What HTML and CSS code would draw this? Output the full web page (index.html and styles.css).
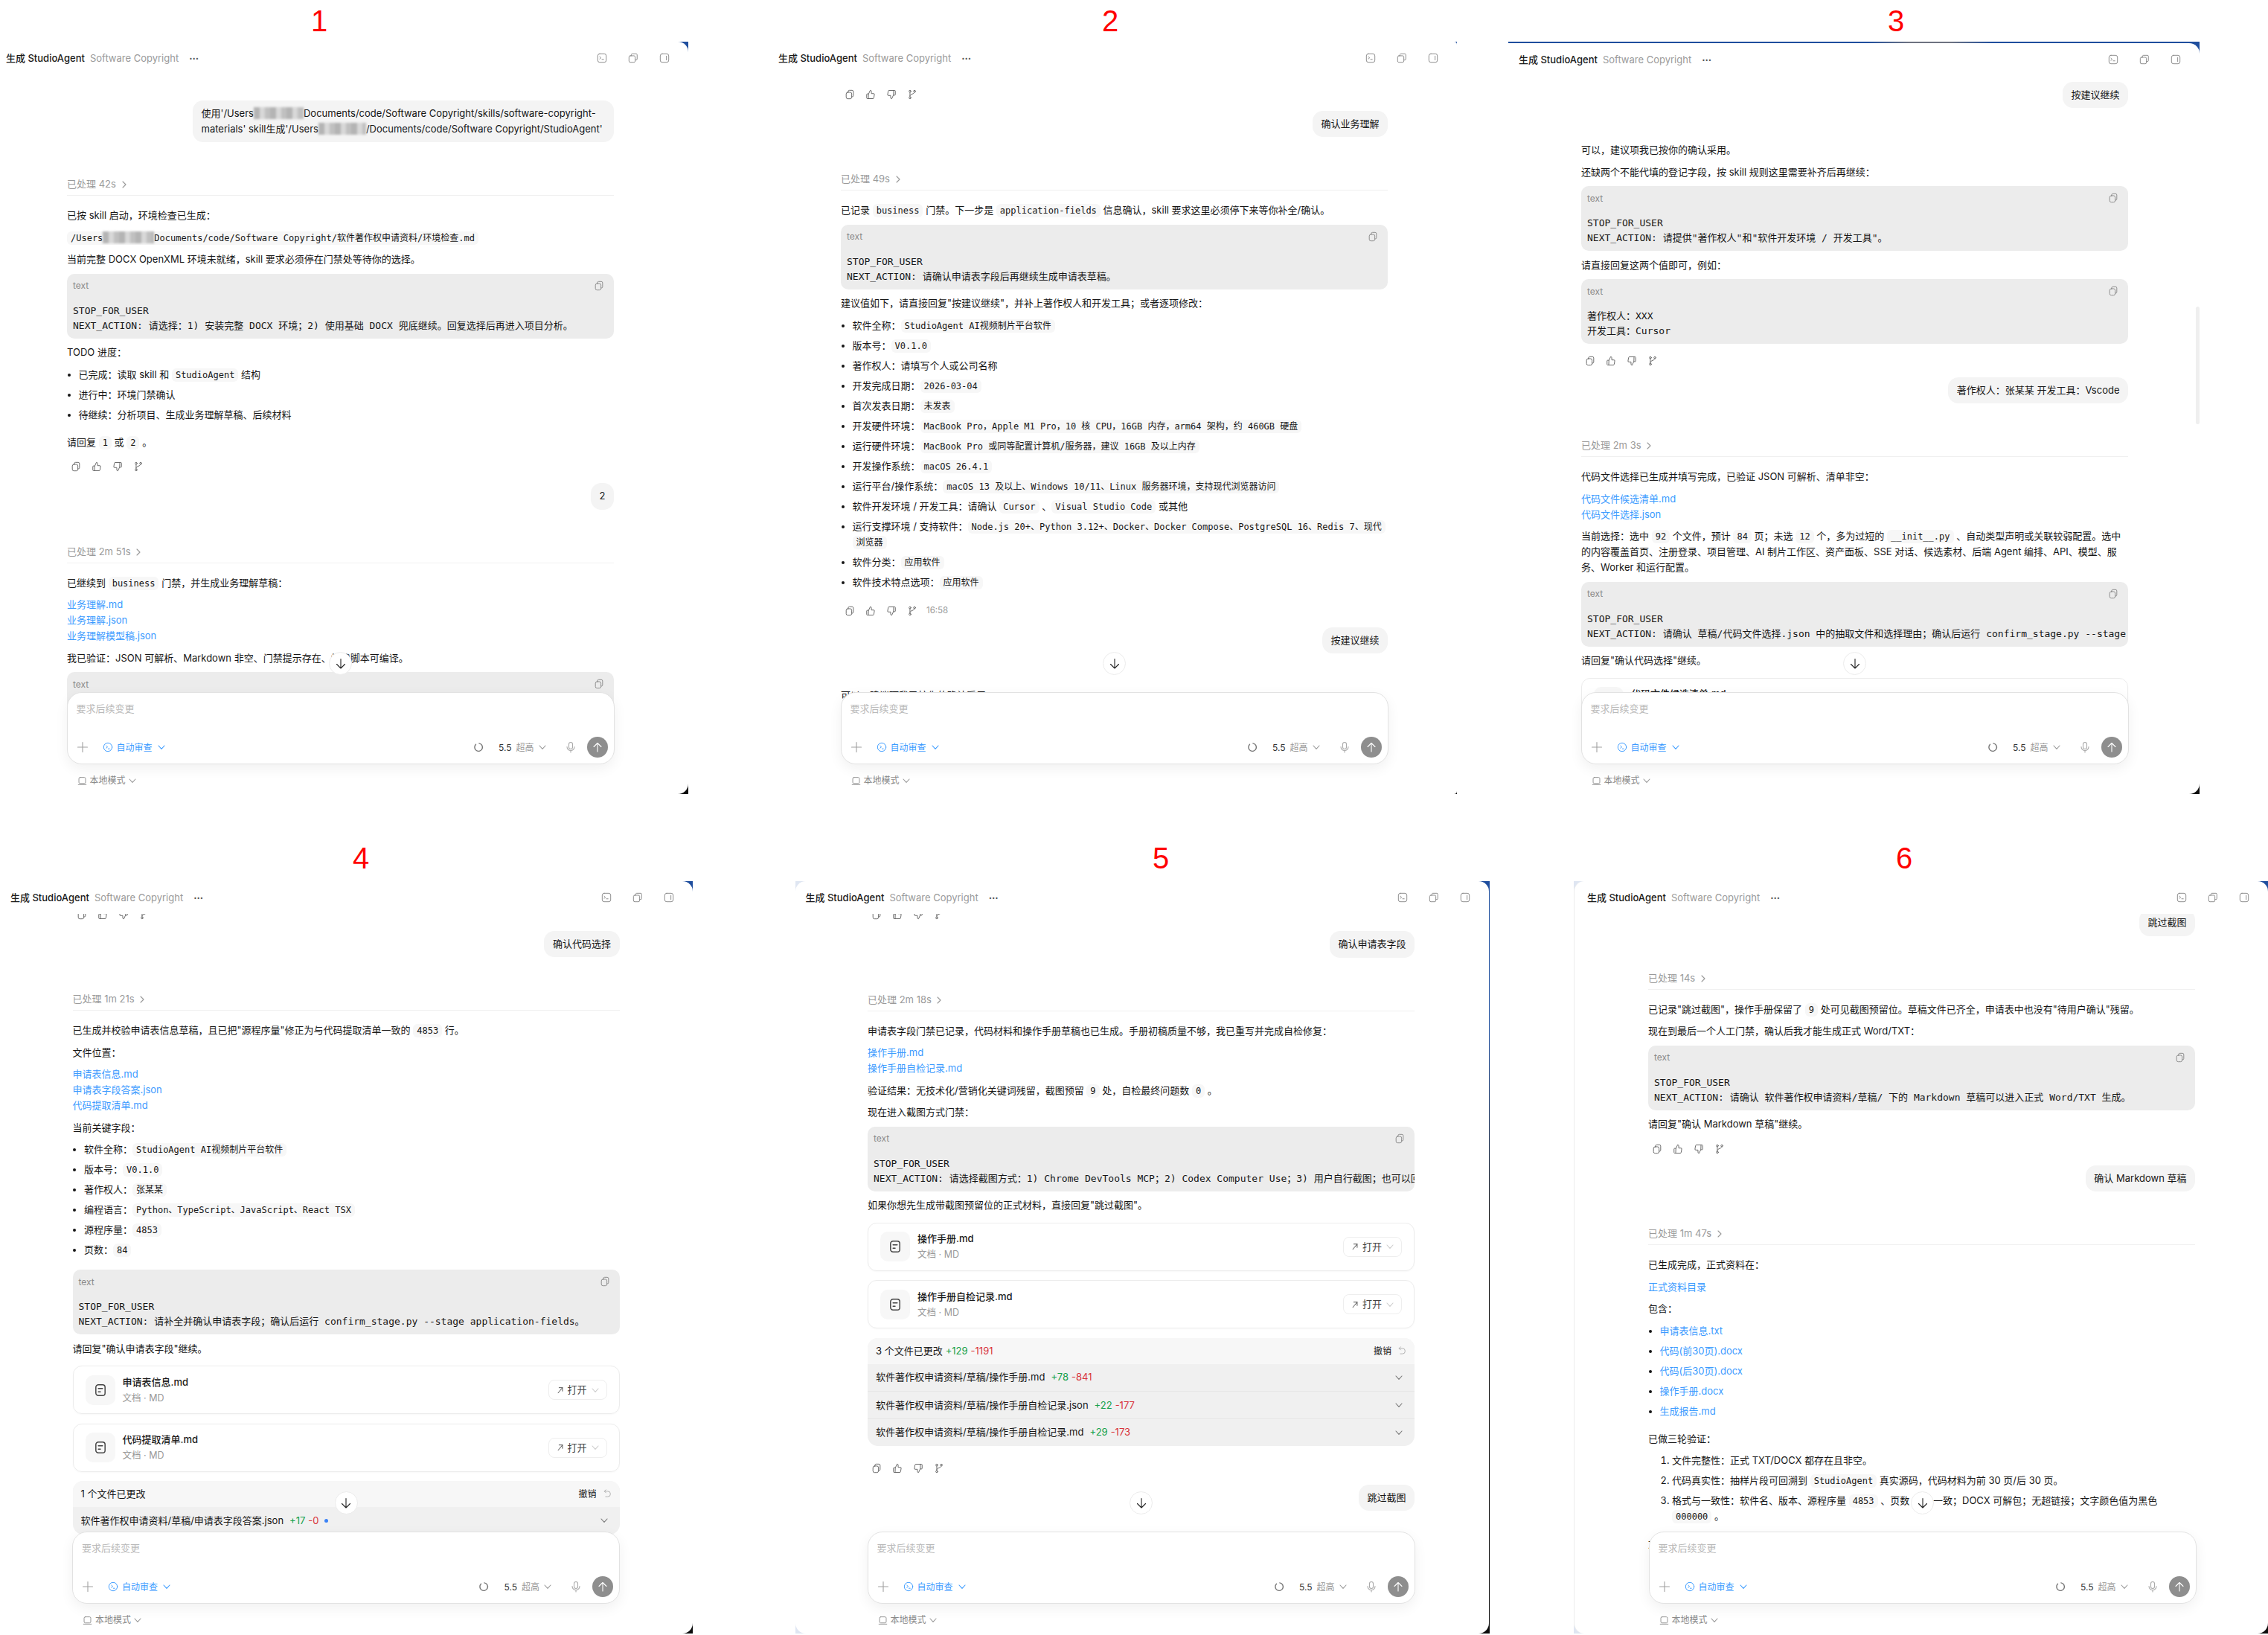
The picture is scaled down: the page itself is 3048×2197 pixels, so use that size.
FILE: index.html
```html
<!DOCTYPE html>
<html lang="zh-CN">
<head>
<meta charset="utf-8">
<title>生成 StudioAgent</title>
<link rel="stylesheet" href="styles.css">
</head>
<body>
<svg class="defs" xmlns="http://www.w3.org/2000/svg">
  <symbol id="term" viewBox="0 0 16 16"><rect x="1.5" y="1.5" width="13" height="13" rx="3"/><path d="M4.5 6l2 1.7-2 1.7M8 10h2.5"/></symbol>
  <symbol id="copy2" viewBox="0 0 16 16"><rect x="1.5" y="4.5" width="9.5" height="10" rx="2"/><path d="M5 4.5V3a1.5 1.5 0 0 1 1.5-1.5h6A1.5 1.5 0 0 1 14 3v6.500a1.500 1.500 0 0 1-1.500 1.500H11"/></symbol>
  <symbol id="side" viewBox="0 0 16 16"><rect x="1.500" y="1.500" width="13" height="13" rx="3"/><path d="M11 5v6"/></symbol>
  <symbol id="copy" viewBox="0 0 16 16"><rect x="2.500" y="4.500" width="8.500" height="10" rx="2.500"/><path d="M5.500 4.500V3.500a2 2 0 0 1 2-2h4a2 2 0 0 1 2 2v6a2 2 0 0 1-2 2H11"/></symbol>
  <symbol id="up" viewBox="0 0 16 16"><path d="M5 7l2.500-5.500a1.700 1.700 0 0 1 1.700 1.700V6.500h3.300a1.300 1.300 0 0 1 1.300 1.500l-.8 5a1.500 1.500 0 0 1-1.500 1.300H5zM5 7H3a1 1 0 0 0-1 1v5.300a1 1 0 0 0 1 1h2"/></symbol>
  <symbol id="down" viewBox="0 0 16 16"><path d="M11 9l-2.500 5.500a1.700 1.700 0 0 1-1.700-1.700V9.500H3.500a1.300 1.300 0 0 1-1.300-1.500l.8-5a1.500 1.500 0 0 1 1.500-1.300H11zM11 9h2a1 1 0 0 0 1-1V2.700a1 1 0 0 0-1-1h-2"/></symbol>
  <symbol id="branch" viewBox="0 0 16 16"><circle cx="4.500" cy="3" r="1.500"/><circle cx="4.500" cy="13" r="1.500"/><circle cx="11.500" cy="3" r="1.500"/><path d="M4.500 4.500v7M11.500 4.500c0 3-7 2.500-7 5.500"/></symbol>
  <symbol id="plus" viewBox="0 0 16 16"><path d="M8 1.500v13M1.500 8h13"/></symbol>
  <symbol id="auto" viewBox="0 0 16 16"><circle cx="8" cy="8" r="6.500"/><path d="M5.500 6l2 1.700-2 1.700M8.500 10.500h2"/></symbol>
  <symbol id="chev" viewBox="0 0 10 10"><path d="M1 3l4 4.300L9 3"/></symbol>
  <symbol id="chevr" viewBox="0 0 10 10"><path d="M3 1l4 4-4 4"/></symbol>
  <symbol id="spin" viewBox="0 0 16 16"><path d="M9 2.200A6 6 0 1 1 4 3.800" stroke-width="1.600"/></symbol>
  <symbol id="mic" viewBox="0 0 16 16"><rect x="5.500" y="1.500" width="5" height="9" rx="2.500"/><path d="M3 7.500a5 5 0 0 0 10 0M8 12.500v2.500"/></symbol>
  <symbol id="aup" viewBox="0 0 16 16"><path d="M8 14V2.500M3 7.500l5-5 5 5"/></symbol>
  <symbol id="adown" viewBox="0 0 16 16"><path d="M8 1.500V14M2.500 8.500L8 14l5.500-5.500"/></symbol>
  <symbol id="doc" viewBox="0 0 16 16"><rect x="2.500" y="1.500" width="11" height="13" rx="3"/><path d="M5.500 6h5M5.500 10h2.500"/></symbol>
  <symbol id="ext" viewBox="0 0 12 12"><path d="M2.500 10.500l7-8.500M4 2h5.500v5.500"/></symbol>
  <symbol id="undo" viewBox="0 0 16 16"><path d="M4 3.500h5.500a4.500 4.500 0 0 1 0 9H6M6.500 1L4 3.500 6.500 6"/></symbol>
  <symbol id="laptop" viewBox="0 0 16 16"><rect x="2.500" y="2" width="11" height="10" rx="2"/><path d="M1.500 14h13"/></symbol>
</svg>

<main class="sheet">
  <section class="row row-top">

    <article class="cell c1">
      <div class="label">1</div>
      <div class="win w1">
        <div class="pane">
          <header class="head"><b class="t">生成 StudioAgent</b><span class="sub">Software Copyright</span><span class="more">···</span><span class="tools"><svg class="i"><use href="#term"/></svg><svg class="i"><use href="#copy2"/></svg><svg class="i"><use href="#side"/></svg></span></header>
          <div class="scroll"><div class="col">
            <div class="user wide">使用'/Users<span class="mosaic m67"></span>Documents/code/Software Copyright/skills/software-copyright-materials' skill生成'/Users<span class="mosaic m64"></span>/Documents/code/Software Copyright/StudioAgent'</div>
            <div class="sec">已处理 42s <svg class="ch"><use href="#chevr"/></svg></div>
            <p>已按 skill 启动，环境检查已生成：</p>
            <p><code class="c">/Users<span class="mosaic m69"></span>Documents/code/Software Copyright/软件著作权申请资料/环境检查.md</code></p>
            <p>当前完整 DOCX OpenXML 环境未就绪，skill 要求必须停在门禁处等待你的选择。</p>
            <div class="block"><div class="bh"><span>text</span><svg class="i"><use href="#copy"/></svg></div><pre>STOP_FOR_USER
NEXT_ACTION: 请选择：1) 安装完整 DOCX 环境；2) 使用基础 DOCX 兜底继续。回复选择后再进入项目分析。</pre></div>
            <p>TODO 进度：</p>
            <ul>
              <li>已完成：读取 skill 和 <code class="c">StudioAgent</code> 结构</li>
              <li>进行中：环境门禁确认</li>
              <li>待继续：分析项目、生成业务理解草稿、后续材料</li>
            </ul>
            <p>请回复 <code class="c">1</code> 或 <code class="c">2</code> 。</p>
            <div class="acts"><svg class="i"><use href="#copy"/></svg><svg class="i"><use href="#up"/></svg><svg class="i"><use href="#down"/></svg><svg class="i"><use href="#branch"/></svg></div>
            <div class="user">2</div>
            <div class="sec">已处理 2m 51s <svg class="ch"><use href="#chevr"/></svg></div>
            <p>已继续到 <code class="c">business</code> 门禁，并生成业务理解草稿：</p>
            <p><a href="#">业务理解.md</a><br><a href="#">业务理解.json</a><br><a href="#">业务理解模型稿.json</a></p>
            <p>我已验证：JSON 可解析、Markdown 非空、门禁提示存在、构建脚本可编译。</p>
            <div class="block"><div class="bh"><span>text</span><svg class="i"><use href="#copy"/></svg></div><pre>STOP_FOR_USER</pre></div>
          </div></div>
          <button class="godown"><svg class="i16"><use href="#adown"/></svg></button>
          <div class="dock">
            <div class="composer">
              <div class="ph">要求后续变更</div>
              <div class="bar"><svg class="i16 plus"><use href="#plus"/></svg><span class="auto"><svg class="i"><use href="#auto"/></svg>自动审查<svg class="ch"><use href="#chev"/></svg></span><span class="right"><svg class="i spin"><use href="#spin"/></svg><span class="ver">5.5</span><span class="lv">超高</span><svg class="ch"><use href="#chev"/></svg><svg class="i16 mic"><use href="#mic"/></svg><span class="send"><svg class="i16"><use href="#aup"/></svg></span></span></div>
            </div>
            <div class="local"><svg class="i"><use href="#laptop"/></svg>本地模式<svg class="ch"><use href="#chev"/></svg></div>
          </div>
        </div>
      </div>
    </article>

    <article class="cell c2">
      <div class="label">2</div>
      <div class="win w2">
        <div class="pane">
          <header class="head"><b class="t">生成 StudioAgent</b><span class="sub">Software Copyright</span><span class="more">···</span><span class="tools"><svg class="i"><use href="#term"/></svg><svg class="i"><use href="#copy2"/></svg><svg class="i"><use href="#side"/></svg></span></header>
          <div class="scroll"><div class="col">
            <div class="acts first"><svg class="i"><use href="#copy"/></svg><svg class="i"><use href="#up"/></svg><svg class="i"><use href="#down"/></svg><svg class="i"><use href="#branch"/></svg></div>
            <div class="user">确认业务理解</div>
            <div class="sec">已处理 49s <svg class="ch"><use href="#chevr"/></svg></div>
            <p>已记录 <code class="c">business</code> 门禁。下一步是 <code class="c">application-fields</code> 信息确认，skill 要求这里必须停下来等你补全/确认。</p>
            <div class="block"><div class="bh"><span>text</span><svg class="i"><use href="#copy"/></svg></div><pre>STOP_FOR_USER
NEXT_ACTION: 请确认申请表字段后再继续生成申请表草稿。</pre></div>
            <p>建议值如下，请直接回复"按建议继续"，并补上著作权人和开发工具；或者逐项修改：</p>
            <ul>
              <li>软件全称：<code class="c">StudioAgent AI视频制片平台软件</code></li>
              <li>版本号：<code class="c">V0.1.0</code></li>
              <li>著作权人：请填写个人或公司名称</li>
              <li>开发完成日期：<code class="c">2026-03-04</code></li>
              <li>首次发表日期：<code class="c">未发表</code></li>
              <li>开发硬件环境：<code class="c">MacBook Pro，Apple M1 Pro，10 核 CPU，16GB 内存，arm64 架构，约 460GB 硬盘</code></li>
              <li>运行硬件环境：<code class="c">MacBook Pro 或同等配置计算机/服务器，建议 16GB 及以上内存</code></li>
              <li>开发操作系统：<code class="c">macOS 26.4.1</code></li>
              <li>运行平台/操作系统：<code class="c">macOS 13 及以上、Windows 10/11、Linux 服务器环境，支持现代浏览器访问</code></li>
              <li>软件开发环境 / 开发工具：请确认 <code class="c">Cursor</code> 、<code class="c">Visual Studio Code</code> 或其他</li>
              <li>运行支撑环境 / 支持软件：<code class="c">Node.js 20+、Python 3.12+、Docker、Docker Compose、PostgreSQL 16、Redis 7、现代浏览器</code></li>
              <li>软件分类：<code class="c">应用软件</code></li>
              <li>软件技术特点选项：<code class="c">应用软件</code></li>
            </ul>
            <div class="acts"><svg class="i"><use href="#copy"/></svg><svg class="i"><use href="#up"/></svg><svg class="i"><use href="#down"/></svg><svg class="i"><use href="#branch"/></svg><span class="time">16:58</span></div>
            <div class="user">按建议继续</div>
            <p>可以，建议项我已按你的确认采用。</p>
          </div></div>
          <button class="godown"><svg class="i16"><use href="#adown"/></svg></button>
          <div class="dock">
            <div class="composer">
              <div class="ph">要求后续变更</div>
              <div class="bar"><svg class="i16 plus"><use href="#plus"/></svg><span class="auto"><svg class="i"><use href="#auto"/></svg>自动审查<svg class="ch"><use href="#chev"/></svg></span><span class="right"><svg class="i spin"><use href="#spin"/></svg><span class="ver">5.5</span><span class="lv">超高</span><svg class="ch"><use href="#chev"/></svg><svg class="i16 mic"><use href="#mic"/></svg><span class="send"><svg class="i16"><use href="#aup"/></svg></span></span></div>
            </div>
            <div class="local"><svg class="i"><use href="#laptop"/></svg>本地模式<svg class="ch"><use href="#chev"/></svg></div>
          </div>
        </div>
      </div>
    </article>

    <article class="cell c3">
      <div class="label">3</div>
      <div class="win w3">
        <div class="pane">
          <header class="head"><b class="t">生成 StudioAgent</b><span class="sub">Software Copyright</span><span class="more">···</span><span class="tools"><svg class="i"><use href="#term"/></svg><svg class="i"><use href="#copy2"/></svg><svg class="i"><use href="#side"/></svg></span></header>
          <div class="scroll"><div class="col">
            <div class="user">按建议继续</div>
            <p>可以，建议项我已按你的确认采用。</p>
            <p>还缺两个不能代填的登记字段，按 skill 规则这里需要补齐后再继续：</p>
            <div class="block"><div class="bh"><span>text</span><svg class="i"><use href="#copy"/></svg></div><pre>STOP_FOR_USER
NEXT_ACTION: 请提供"著作权人"和"软件开发环境 / 开发工具"。</pre></div>
            <p>请直接回复这两个值即可，例如：</p>
            <div class="block"><div class="bh"><span>text</span><svg class="i"><use href="#copy"/></svg></div><pre>著作权人：XXX
开发工具：Cursor</pre></div>
            <div class="acts"><svg class="i"><use href="#copy"/></svg><svg class="i"><use href="#up"/></svg><svg class="i"><use href="#down"/></svg><svg class="i"><use href="#branch"/></svg></div>
            <div class="user">著作权人：张某某 开发工具：Vscode</div>
            <div class="sec">已处理 2m 3s <svg class="ch"><use href="#chevr"/></svg></div>
            <p>代码文件选择已生成并填写完成，已验证 JSON 可解析、清单非空：</p>
            <p><a href="#">代码文件候选清单.md</a><br><a href="#">代码文件选择.json</a></p>
            <p>当前选择：选中 <code class="c">92</code> 个文件，预计 <code class="c">84</code> 页；未选 <code class="c">12</code> 个，多为过短的 <code class="c">__init__.py</code> 、自动类型声明或关联较弱配置。选中的内容覆盖首页、注册登录、项目管理、AI 制片工作区、资产面板、SSE 对话、候选素材、后端 Agent 编排、API、模型、服务、Worker 和运行配置。</p>
            <div class="block"><div class="bh"><span>text</span><svg class="i"><use href="#copy"/></svg></div><pre>STOP_FOR_USER
NEXT_ACTION: 请确认 草稿/代码文件选择.json 中的抽取文件和选择理由；确认后运行 confirm_stage.py --stage code-selection。</pre></div>
            <p>请回复"确认代码选择"继续。</p>
            <div class="card"><span class="dbox"><svg class="i16"><use href="#doc"/></svg></span><span class="dmeta"><b>代码文件候选清单.md</b><small>文档 · MD</small></span><span class="open"><svg class="ex"><use href="#ext"/></svg>打开<svg class="ch"><use href="#chev"/></svg></span></div>
          </div></div>
          <button class="godown"><svg class="i16"><use href="#adown"/></svg></button>
          <div class="bar-scroll"></div>
          <div class="dock">
            <div class="composer">
              <div class="ph">要求后续变更</div>
              <div class="bar"><svg class="i16 plus"><use href="#plus"/></svg><span class="auto"><svg class="i"><use href="#auto"/></svg>自动审查<svg class="ch"><use href="#chev"/></svg></span><span class="right"><svg class="i spin"><use href="#spin"/></svg><span class="ver">5.5</span><span class="lv">超高</span><svg class="ch"><use href="#chev"/></svg><svg class="i16 mic"><use href="#mic"/></svg><span class="send"><svg class="i16"><use href="#aup"/></svg></span></span></div>
            </div>
            <div class="local"><svg class="i"><use href="#laptop"/></svg>本地模式<svg class="ch"><use href="#chev"/></svg></div>
          </div>
        </div>
      </div>
    </article>
  </section>

  <section class="row row-bottom">

    <article class="cell c4">
      <div class="label">4</div>
      <div class="win w4">
        <div class="pane">
          <header class="head"><b class="t">生成 StudioAgent</b><span class="sub">Software Copyright</span><span class="more">···</span><span class="tools"><svg class="i"><use href="#term"/></svg><svg class="i"><use href="#copy2"/></svg><svg class="i"><use href="#side"/></svg></span></header>
          <div class="scroll"><div class="col">
            <div class="acts first"><svg class="i"><use href="#copy"/></svg><svg class="i"><use href="#up"/></svg><svg class="i"><use href="#down"/></svg><svg class="i"><use href="#branch"/></svg></div>
            <div class="user">确认代码选择</div>
            <div class="sec">已处理 1m 21s <svg class="ch"><use href="#chevr"/></svg></div>
            <p>已生成并校验申请表信息草稿，且已把"源程序量"修正为与代码提取清单一致的 <code class="c">4853</code> 行。</p>
            <p>文件位置：</p>
            <p><a href="#">申请表信息.md</a><br><a href="#">申请表字段答案.json</a><br><a href="#">代码提取清单.md</a></p>
            <p>当前关键字段：</p>
            <ul>
              <li>软件全称：<code class="c">StudioAgent AI视频制片平台软件</code></li>
              <li>版本号：<code class="c">V0.1.0</code></li>
              <li>著作权人：<code class="c">张某某</code></li>
              <li>编程语言：<code class="c">Python、TypeScript、JavaScript、React TSX</code></li>
              <li>源程序量：<code class="c">4853</code></li>
              <li>页数：<code class="c">84</code></li>
            </ul>
            <div class="block"><div class="bh"><span>text</span><svg class="i"><use href="#copy"/></svg></div><pre>STOP_FOR_USER
NEXT_ACTION: 请补全并确认申请表字段；确认后运行 confirm_stage.py --stage application-fields。</pre></div>
            <p>请回复"确认申请表字段"继续。</p>
            <div class="card"><span class="dbox"><svg class="i16"><use href="#doc"/></svg></span><span class="dmeta"><b>申请表信息.md</b><small>文档 · MD</small></span><span class="open"><svg class="ex"><use href="#ext"/></svg>打开<svg class="ch"><use href="#chev"/></svg></span></div>
            <div class="card"><span class="dbox"><svg class="i16"><use href="#doc"/></svg></span><span class="dmeta"><b>代码提取清单.md</b><small>文档 · MD</small></span><span class="open"><svg class="ex"><use href="#ext"/></svg>打开<svg class="ch"><use href="#chev"/></svg></span></div>
            <div class="changes">
              <div class="ch-head"><span>1 个文件已更改</span><span class="revert">撤销<svg class="i"><use href="#undo"/></svg></span></div>
              <div class="ch-row"><span>软件著作权申请资料/草稿/申请表字段答案.json</span><i class="add">+17</i><i class="del">-0</i><i class="dot"></i><svg class="ch end"><use href="#chev"/></svg></div>
            </div>
          </div></div>
          <button class="godown"><svg class="i16"><use href="#adown"/></svg></button>
          <div class="dock">
            <div class="composer">
              <div class="ph">要求后续变更</div>
              <div class="bar"><svg class="i16 plus"><use href="#plus"/></svg><span class="auto"><svg class="i"><use href="#auto"/></svg>自动审查<svg class="ch"><use href="#chev"/></svg></span><span class="right"><svg class="i spin"><use href="#spin"/></svg><span class="ver">5.5</span><span class="lv">超高</span><svg class="ch"><use href="#chev"/></svg><svg class="i16 mic"><use href="#mic"/></svg><span class="send"><svg class="i16"><use href="#aup"/></svg></span></span></div>
            </div>
            <div class="local"><svg class="i"><use href="#laptop"/></svg>本地模式<svg class="ch"><use href="#chev"/></svg></div>
          </div>
        </div>
      </div>
    </article>

    <article class="cell c5">
      <div class="label">5</div>
      <div class="win w5">
        <div class="pane">
          <header class="head"><b class="t">生成 StudioAgent</b><span class="sub">Software Copyright</span><span class="more">···</span><span class="tools"><svg class="i"><use href="#term"/></svg><svg class="i"><use href="#copy2"/></svg><svg class="i"><use href="#side"/></svg></span></header>
          <div class="scroll"><div class="col">
            <div class="acts first"><svg class="i"><use href="#copy"/></svg><svg class="i"><use href="#up"/></svg><svg class="i"><use href="#down"/></svg><svg class="i"><use href="#branch"/></svg></div>
            <div class="user">确认申请表字段</div>
            <div class="sec">已处理 2m 18s <svg class="ch"><use href="#chevr"/></svg></div>
            <p>申请表字段门禁已记录，代码材料和操作手册草稿也已生成。手册初稿质量不够，我已重写并完成自检修复：</p>
            <p><a href="#">操作手册.md</a><br><a href="#">操作手册自检记录.md</a></p>
            <p>验证结果：无技术化/营销化关键词残留，截图预留 <code class="c">9</code> 处，自检最终问题数 <code class="c">0</code> 。</p>
            <p>现在进入截图方式门禁：</p>
            <div class="block"><div class="bh"><span>text</span><svg class="i"><use href="#copy"/></svg></div><pre>STOP_FOR_USER
NEXT_ACTION: 请选择截图方式：1) Chrome DevTools MCP；2) Codex Computer Use；3) 用户自行截图；也可以回复跳过截图。</pre></div>
            <p>如果你想先生成带截图预留位的正式材料，直接回复"跳过截图"。</p>
            <div class="card"><span class="dbox"><svg class="i16"><use href="#doc"/></svg></span><span class="dmeta"><b>操作手册.md</b><small>文档 · MD</small></span><span class="open"><svg class="ex"><use href="#ext"/></svg>打开<svg class="ch"><use href="#chev"/></svg></span></div>
            <div class="card"><span class="dbox"><svg class="i16"><use href="#doc"/></svg></span><span class="dmeta"><b>操作手册自检记录.md</b><small>文档 · MD</small></span><span class="open"><svg class="ex"><use href="#ext"/></svg>打开<svg class="ch"><use href="#chev"/></svg></span></div>
            <div class="changes">
              <div class="ch-head"><span>3 个文件已更改<i class="add">+129</i><i class="del">-1191</i></span><span class="revert">撤销<svg class="i"><use href="#undo"/></svg></span></div>
              <div class="ch-row"><span>软件著作权申请资料/草稿/操作手册.md</span><i class="add">+78</i><i class="del">-841</i><svg class="ch end"><use href="#chev"/></svg></div>
              <div class="ch-row"><span>软件著作权申请资料/草稿/操作手册自检记录.json</span><i class="add">+22</i><i class="del">-177</i><svg class="ch end"><use href="#chev"/></svg></div>
              <div class="ch-row"><span>软件著作权申请资料/草稿/操作手册自检记录.md</span><i class="add">+29</i><i class="del">-173</i><svg class="ch end"><use href="#chev"/></svg></div>
            </div>
            <div class="acts"><svg class="i"><use href="#copy"/></svg><svg class="i"><use href="#up"/></svg><svg class="i"><use href="#down"/></svg><svg class="i"><use href="#branch"/></svg></div>
            <div class="user">跳过截图</div>
          </div></div>
          <button class="godown"><svg class="i16"><use href="#adown"/></svg></button>
          <div class="dock">
            <div class="composer">
              <div class="ph">要求后续变更</div>
              <div class="bar"><svg class="i16 plus"><use href="#plus"/></svg><span class="auto"><svg class="i"><use href="#auto"/></svg>自动审查<svg class="ch"><use href="#chev"/></svg></span><span class="right"><svg class="i spin"><use href="#spin"/></svg><span class="ver">5.5</span><span class="lv">超高</span><svg class="ch"><use href="#chev"/></svg><svg class="i16 mic"><use href="#mic"/></svg><span class="send"><svg class="i16"><use href="#aup"/></svg></span></span></div>
            </div>
            <div class="local"><svg class="i"><use href="#laptop"/></svg>本地模式<svg class="ch"><use href="#chev"/></svg></div>
          </div>
        </div>
      </div>
    </article>

    <article class="cell c6">
      <div class="label">6</div>
      <div class="win w6">
        <div class="pane">
          <header class="head"><b class="t">生成 StudioAgent</b><span class="sub">Software Copyright</span><span class="more">···</span><span class="tools"><svg class="i"><use href="#term"/></svg><svg class="i"><use href="#copy2"/></svg><svg class="i"><use href="#side"/></svg></span></header>
          <div class="scroll"><div class="col">
            <div class="user">跳过截图</div>
            <div class="sec">已处理 14s <svg class="ch"><use href="#chevr"/></svg></div>
            <p>已记录"跳过截图"，操作手册保留了 <code class="c">9</code> 处可见截图预留位。草稿文件已齐全，申请表中也没有"待用户确认"残留。</p>
            <p>现在到最后一个人工门禁，确认后我才能生成正式 Word/TXT：</p>
            <div class="block"><div class="bh"><span>text</span><svg class="i"><use href="#copy"/></svg></div><pre>STOP_FOR_USER
NEXT_ACTION: 请确认 软件著作权申请资料/草稿/ 下的 Markdown 草稿可以进入正式 Word/TXT 生成。</pre></div>
            <p>请回复"确认 Markdown 草稿"继续。</p>
            <div class="acts"><svg class="i"><use href="#copy"/></svg><svg class="i"><use href="#up"/></svg><svg class="i"><use href="#down"/></svg><svg class="i"><use href="#branch"/></svg></div>
            <div class="user">确认 Markdown 草稿</div>
            <div class="sec">已处理 1m 47s <svg class="ch"><use href="#chevr"/></svg></div>
            <p>已生成完成，正式资料在：</p>
            <p><a href="#">正式资料目录</a></p>
            <p>包含：</p>
            <ul>
              <li><a href="#">申请表信息.txt</a></li>
              <li><a href="#">代码(前30页).docx</a></li>
              <li><a href="#">代码(后30页).docx</a></li>
              <li><a href="#">操作手册.docx</a></li>
              <li><a href="#">生成报告.md</a></li>
            </ul>
            <p>已做三轮验证：</p>
            <ol>
              <li>文件完整性：正式 TXT/DOCX 都存在且非空。</li>
              <li>代码真实性：抽样片段可回溯到 <code class="c">StudioAgent</code> 真实源码，代码材料为前 30 页/后 30 页。</li>
              <li>格式与一致性：软件名、版本、源程序量 <code class="c">4853</code> 、页数 <code class="c">84</code> 一致；DOCX 可解包；无超链接；文字颜色值为黑色 <code class="c">000000</code> 。</li>
            </ol>
            <p>文件已全部生成。</p>
          </div></div>
          <button class="godown"><svg class="i16"><use href="#adown"/></svg></button>
          <div class="dock">
            <div class="composer">
              <div class="ph">要求后续变更</div>
              <div class="bar"><svg class="i16 plus"><use href="#plus"/></svg><span class="auto"><svg class="i"><use href="#auto"/></svg>自动审查<svg class="ch"><use href="#chev"/></svg></span><span class="right"><svg class="i spin"><use href="#spin"/></svg><span class="ver">5.5</span><span class="lv">超高</span><svg class="ch"><use href="#chev"/></svg><svg class="i16 mic"><use href="#mic"/></svg><span class="send"><svg class="i16"><use href="#aup"/></svg></span></span></div>
            </div>
            <div class="local"><svg class="i"><use href="#laptop"/></svg>本地模式<svg class="ch"><use href="#chev"/></svg></div>
          </div>
        </div>
      </div>
    </article>
  </section>
</main>
</body>
</html>
```
FILE: styles.css
```css
* { box-sizing: border-box; }
html, body { margin: 0; background: #fff; overflow: hidden; }
body {
  width: 3048px; height: 2197px;
  font: 13px/21px Inter, "Noto Sans CJK SC", sans-serif;
  color: #161616;
}
.defs { position: absolute; width: 0; height: 0; overflow: hidden; }
svg { fill: none; stroke: currentColor; stroke-width: 1.1; stroke-linecap: round; stroke-linejoin: round; flex: none; }
.i { width: 14px; height: 14px; }
.i16 { width: 16px; height: 16px; }
.ch { width: 10px; height: 10px; color: #999; }
.ex { width: 10px; height: 10px; }

.sheet { width: 3048px; height: 2197px; overflow: hidden; }
.row { display: flex; }
.row-top { margin-left: -5px; height: 1067px; }
.row-bottom { margin-left: 1px; margin-top: 61px; }
.row-bottom .label { line-height: 50px; }

.cell { flex: none; }
.c1 { width: 930px; --lbl: 423px; --pl: 95px; --hl: 13px; --top: 34.5px; }
.c2 { width: 925px; margin-left: 108px; --lbl: 448px; --pl: 97px; --hl: 13px; --top: 18.5px; }
.c3 { width: 929px; margin-left: 69px; --lbl: 510px; --pl: 98px; --hl: 14px; --top: 7.5px; }
.c4 { width: 930px; --lbl: 473px; --pl: 96.500px; --hl: 13px; --top: -7.500px; }
.c5 { width: 933px; margin-left: 138px; --lbl: 480px; --pl: 97px; --hl: 13.500px; --top: -7px; }
.c6 { width: 933px; margin-left: 113px; --lbl: 433px; --pl: 100px; --hl: 17px; --top: -6px; }

.label {
  height: 56px; line-height: 56px; padding-left: var(--lbl);
  font: 40px/56px "Liberation Sans", sans-serif; color: #f00;
}
.win { height: 1011px; display: flow-root; }
.pane {
  position: relative; height: 100%;
  display: flex; flex-direction: column;
  background: #fff; border-radius: 14px; overflow: hidden;
}
.w1, .w4 { background: linear-gradient(90deg, #fff 50%, transparent 50%), linear-gradient(180deg, #1f4e9e 0 30%, #0c0c0c 70%); }
.w2 { background: linear-gradient(90deg, #fff 50%, transparent 50%), linear-gradient(180deg, #1f4e9e 0 30%, #0c0c0c 70%); }
.w2 .pane { border-radius: 4px; }
.w3 {
  background:
    linear-gradient(90deg, #1f4e9e 0 52%, #6d7280 58% 64%, #1f4e9e 70%) top / 100% 2px no-repeat,
    linear-gradient(90deg, #fff 50%, transparent 50%),
    linear-gradient(180deg, #1f4e9e 0 30%, #0c0c0c 70%);
}
.w3 .pane { margin-top: 2px; height: calc(100% - 2px); }
.w5 { background: linear-gradient(90deg, #dfe6f2 50%, transparent 50%), linear-gradient(180deg, #1f4e9e 0 20%, #0c0c0c 45%); }
.w5 .pane { margin-right: 1.500px; }
.w6 { background: linear-gradient(90deg, #dfe6f2 50%, transparent 50%), linear-gradient(180deg, #1f4e9e 0 30%, #0c0c0c 70%); }
.w6 .pane { border-left: 1px solid #ececec; }
.w6 .col { margin-left: -1px; }

.head {
  flex: none; height: 44px; display: flex; align-items: center;
  padding: 0 25px 0 var(--hl);
}
.t { font-weight: 500; color: #1a1a1a; }
.sub { margin-left: 7px; color: #9a9a9a; }
.more { margin-left: 14px; color: #555; font-weight: 700; }
.tools { margin-left: auto; display: flex; gap: 28px; color: #8a8a8a; }

.scroll { flex: 1; min-height: 0; overflow: hidden; margin-bottom: 60px; padding-left: var(--pl); }
.col { width: 735px; margin-top: var(--top); }
.col > :first-child { margin-top: 0; }

p { margin: 8.500px 0; }
a { color: #3b9bff; text-decoration: none; }

.user {
  width: fit-content; max-width: 566px; margin: 14px 0 46px auto;
  padding: 7.300px 11.500px; background: #f4f4f4; border-radius: 14px;
}
.sec {
  height: 26px; margin-bottom: 16px; padding-bottom: 5px;
  line-height: 20px; color: #9a9a9a; border-bottom: 1px solid #f0f0f0;
}
.sec .ch { margin-left: 2px; vertical-align: -1px; }

.c {
  font: 12px/18px "DejaVu Sans Mono", "Noto Sans CJK SC", monospace;
  background: #f7f7f7; border-radius: 6px; padding: 2px 5px;
  -webkit-box-decoration-break: clone; box-decoration-break: clone;
}
.mosaic {
  display: inline-block; height: 16px; vertical-align: -3px;
  background: repeating-linear-gradient(90deg, #b4b4b4 0 8px, #d8d8d8 8px 15px, #c0c0c0 15px 22px);
  filter: blur(1.500px);
}
.m67 { width: 67px; } .m64 { width: 64px; } .m69 { width: 69px; }

.block {
  margin: 8.500px 0; height: 87px; background: #ececec; border-radius: 10px; overflow: hidden;
}
.bh {
  height: 32px; padding: 0 13px 0 8px; display: flex; align-items: center; justify-content: space-between;
  font-size: 12px; color: #8a8a8a;
}
.block pre {
  margin: 0; padding: 8px 8px 7px; overflow: hidden; white-space: pre;
  font: 13px/20px "DejaVu Sans Mono", "Noto Sans CJK SC", monospace; color: #161616;
}

ul, ol { margin: 8.500px 0 16px; padding: 0; }
ul { padding-left: 15.500px; }
ol { padding-left: 32px; }
li { margin-bottom: 6px; padding-left: 0; }
li:last-child { margin-bottom: 0; }
li::marker { color: #161616; }

.acts { height: 16px; margin: 14.500px 0 0 5px; display: flex; align-items: center; gap: 14px; color: #666; }
.acts.first { margin-top: 0; }
ul + .acts { margin-top: 20px; }
.changes + .acts { margin-top: 22px; }
.time { margin-left: -2px; font-size: 11.500px; color: #999; }

.card {
  height: 65px; margin: 12.500px 0; padding: 0 16px;
  display: flex; align-items: center;
  border: 1px solid #ececec; border-radius: 12px; box-shadow: 0 1px 2px rgba(0,0,0,.03);
}
.dbox {
  width: 40px; height: 40px; border-radius: 10px; background: #f7f7f7;
  display: flex; align-items: center; justify-content: center; color: #444;
}
.dbox svg { width: 18px; height: 18px; stroke-width: 1.3; }
.dmeta { margin-left: 10px; display: flex; flex-direction: column; line-height: 21px; }
.dmeta b { font-weight: 500; color: #1a1a1a; }
.dmeta small { font-size: 12.500px; color: #999; }
.open {
  margin-left: auto; width: 79px; height: 27px; padding: 0 10px;
  display: flex; align-items: center; gap: 5px;
  border: 1px solid #eeeeee; border-radius: 8px; color: #444;
}
.open .ch { margin-left: auto; color: #ccc; }

.changes { margin: 12.500px 0; background: #f0f0f0; border-radius: 14px; overflow: hidden; }
.ch-head {
  height: 35px; padding: 0 11px; display: flex; align-items: center; justify-content: space-between;
  background: #f7f7f7;
}
.ch-row {
  height: 36.700px; padding: 0 16px 0 11px; display: flex; align-items: center;
  border-top: 1px solid #e6e6e6;
}
.ch-head + .ch-row { border-top: 0; }
.add, .del { font-style: normal; }
.add { margin-left: 8px; color: #14a04a; }
.del { margin-left: 4px; color: #d8323a; }
.ch-head .add { margin-left: 4px; }
.dot { width: 5px; height: 5px; margin-left: 7px; border-radius: 50%; background: #3b82f6; }
.ch.end { margin-left: auto; color: #777; }
.revert { display: flex; align-items: center; gap: 7px; font-size: 12px; }
.revert .i { width: 13px; height: 13px; color: #aaa; }

.godown {
  position: absolute; left: calc(var(--pl) + 352px); bottom: 160px;
  width: 31px; height: 31px; padding: 0;
  display: flex; align-items: center; justify-content: center;
  background: #fff; border: 1px solid #ececec; border-radius: 50%; color: #222;
}
.bar-scroll {
  position: absolute; right: 0; top: 354px; width: 5px; height: 158px;
  background: #efefef; border-radius: 3px;
}

.dock { position: absolute; left: calc(var(--pl) - .5px); bottom: 10px; width: 736px; }
.composer {
  height: 97px; padding: 11px 8px 8px 12px;
  display: flex; flex-direction: column; justify-content: space-between;
  background: #fff; border: 1px solid #e2e2e2; border-radius: 20px;
  box-shadow: 0 6px 18px rgba(0,0,0,.06);
}
.ph { color: #b9b9b9; line-height: 20px; }
.bar { height: 28px; display: flex; align-items: center; color: #8a8a8a; }
.plus { color: #a0a0a0; }
.auto { margin-left: 19px; display: flex; align-items: center; gap: 5px; font-size: 12px; color: #3b9bff; }
.auto .ch { color: #3b9bff; margin-left: 2px; }
.right { margin-left: auto; display: flex; align-items: center; font-size: 12px; }
.spin { color: #777; margin-right: 20px; }
.ver { color: #333; margin-right: 6px; }
.lv { color: #999; margin-right: 6px; }
.mic { margin-left: 25px; color: #aaa; }
.send {
  width: 28px; height: 28px; margin-left: 14px; border-radius: 50%;
  background: #8e8e8e; color: #fff;
  display: flex; align-items: center; justify-content: center;
}
.local {
  height: 16px; margin: 14px 0 0 14px; display: flex; align-items: center; gap: 4px;
  font-size: 12px; line-height: 16px; color: #8a8a8a;
}
.local .i { width: 13px; height: 13px; }
```
